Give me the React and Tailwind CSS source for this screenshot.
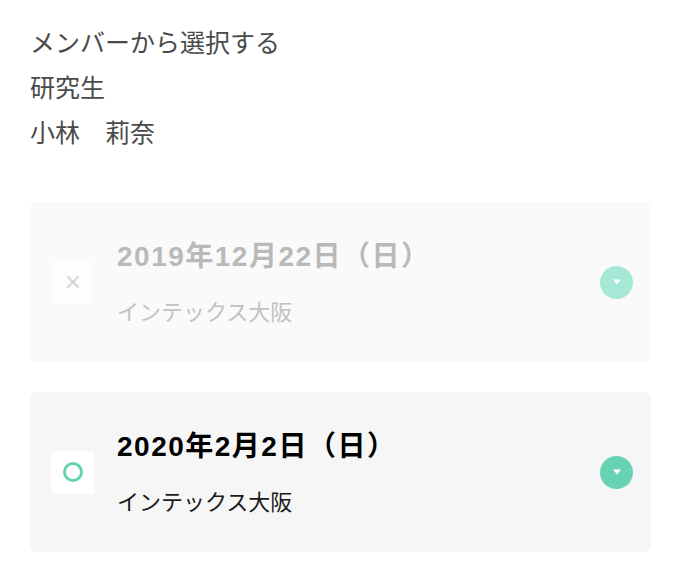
const font = { fontFamily: '"Noto Sans CJK JP", "Noto Sans", sans-serif' };
const titleFont = { fontFamily: '"Liberation Sans", "Noto Sans CJK JP", sans-serif' };

export default function App() {
  return (
    <div className="min-h-[575px] w-[680px] bg-white pl-[30px] pr-[29px] pt-[19px]" style={font}>
      <div className="text-[25px] leading-[45px] text-[#4a4a4a]">
        <p>メンバーから選択する</p>
        <p>研究生</p>
        <p>小林　莉奈</p>
      </div>
      <div className="mt-[48px] flex flex-col gap-[30px]">
        <DateCard
          title="2019年12月22日（日）"
          place="インテックス大阪"
          disabled
        />
        <DateCard title="2020年2月2日（日）" place="インテックス大阪" />
      </div>
    </div>
  );
}

function DateCard({ title, place, disabled }) {
  return (
    <div
      className={
        "flex h-[160px] items-center rounded-[6px] pl-[21px] pr-[18px] " +
        (disabled ? "bg-[#fafafa]" : "bg-[#f6f6f6]")
      }
    >
      <div className={"flex h-[43px] w-[43px] items-center justify-center rounded-[4px] " + (disabled ? "bg-[#fdfdfd]" : "bg-white")}>
        {disabled ? (
          <svg width="16" height="16" viewBox="0 0 16 16">
            <path d="M3 3 L13 13 M13 3 L3 13" stroke="#d4d6d8" strokeWidth="2.2" strokeLinecap="round" />
          </svg>
        ) : (
          <svg width="22" height="22" viewBox="0 0 22 22">
            <circle cx="11" cy="11" r="8.5" fill="none" stroke="#66d1b2" strokeWidth="3" />
          </svg>
        )}
      </div>
      <div className="ml-[23px] flex flex-1 flex-col">
        <p
          style={titleFont}
          className={
            "text-[28px] font-bold leading-[36px] tracking-[1.5px] " +
            (disabled ? "text-[#b9b9b9]" : "text-black")
          }
        >
          {title}
        </p>
        <p
          className={
            "mt-[20px] text-[22px] leading-[30px] " +
            (disabled ? "text-[#c2c2c2]" : "text-[#1a1a1a]")
          }
        >
          {place}
        </p>
      </div>
      <div
        className={
          "flex h-[33px] w-[33px] items-center justify-center rounded-full " +
          (disabled ? "bg-[#a6e8d6]" : "bg-[#66d4b4]")
        }
      >
        <svg width="10" height="8" viewBox="0 0 10 8">
          <path d="M1 1.5 L9 1.5 L5 6.5 Z" fill="white" />
        </svg>
      </div>
    </div>
  );
}
